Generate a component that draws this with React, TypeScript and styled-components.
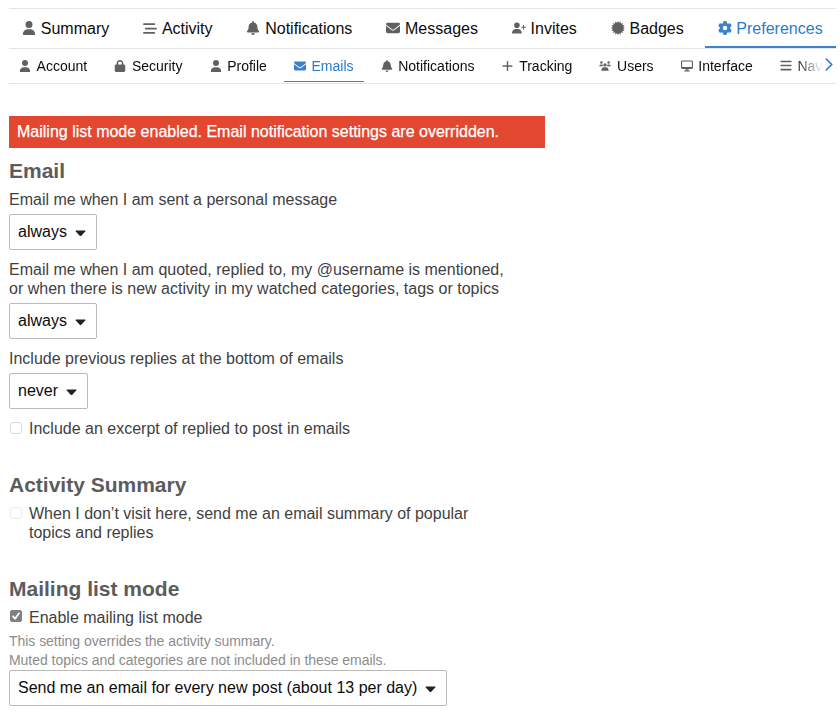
import React from 'react';
import styled, { createGlobalStyle } from 'styled-components';
import {
  FaBars, FaBarsStaggered, FaBell, FaEnvelope, FaGear, FaLock,
  FaUser, FaUserPlus,
} from 'react-icons/fa6';

const Global = createGlobalStyle`
  *, *::before, *::after { box-sizing: border-box; }
  body { margin: 0; background: #fff; overflow: hidden; }
`;

const Page = styled.div`
  height: 713px;
  padding: 8px 4px 0 9px;
  overflow: hidden;
  font-family: "Liberation Sans", Arial, sans-serif;
  font-size: 16px;
  line-height: 19px;
  color: #3f3f3f;
`;

const PrimaryNav = styled.nav`
  display: flex;
  gap: 7.85px;
  width: 827px;
  height: 41px;
  border-top: 1px solid #e6e6e6;
  border-bottom: 1px solid #e6e6e6;
`;

const SecondaryWrap = styled.div`
  display: flex;
  width: 827px;
  height: 35px;
  border-bottom: 1px solid #e6e6e6;
`;

const SecondaryNav = styled.nav`
  display: flex;
  gap: 7.1px;
  width: 814px;
  overflow: hidden;
  mask-image: linear-gradient(to right, #000 786px, transparent 814px);
`;

const NavItem = styled.a<{ $active?: boolean; $small?: boolean }>`
  display: flex;
  flex: none;
  align-items: center;
  gap: ${(p) => (p.$small ? '5.6px' : '4.8px')};
  padding: ${(p) => (p.$small ? '2px 10px 0' : '0 13px 1px')};
  font-size: ${(p) => (p.$small ? '14px' : '16px')};
  color: ${(p) => (p.$active ? '#2b7bca' : '#0c0c0c')};
  border-bottom: ${(p) => (p.$small ? '1px' : '2px')} solid ${(p) => (p.$active ? '#3f82cc' : 'transparent')};
  border-top: ${(p) => (p.$small ? '1px' : '2px')} solid transparent;
  margin-bottom: ${(p) => (p.$small ? '1px' : '0')};
`;

const IconBox = styled.span<{ $active?: boolean; $small?: boolean }>`
  display: flex;
  flex: none;
  align-items: center;
  justify-content: center;
  width: ${(p) => (p.$small ? '12px' : '14px')};
  height: 14px;
  margin-top: ${(p) => (p.$small ? '-2px' : '0')};
  color: ${(p) => (p.$active ? '#3f82cc' : '#606060')};
`;

const ScrollButton = styled.button`
  display: flex;
  align-items: center;
  justify-content: center;
  width: 12px;
  padding: 0 0 3px;
  border: 0;
  background: none;
`;

const Content = styled.main`
  width: 536px;
  padding-top: 32px;
`;

const Warning = styled.div`
  height: 32px;
  padding-left: 8px;
  background: #e44730;
  color: #fff;
  line-height: 32px;
  -webkit-text-stroke: 0.25px #fff;
`;

const Section = styled.section`
  margin-top: 10px;
  & + & { margin-top: 34px; }
`;

const Heading = styled.h3`
  margin: 0;
  font-size: 21px;
  line-height: 26px;
  font-weight: bold;
  color: #5c5c5c;
`;

const Field = styled.div`
  margin-top: 6px;
  & + & { margin-top: 10px; }
`;

const Label = styled.div`
  white-space: pre-line;
`;

const Select = styled.div<{ $width: number; $top?: number }>`
  display: flex;
  align-items: center;
  justify-content: space-between;
  width: ${(p) => p.$width}px;
  height: 36px;
  margin-top: ${(p) => p.$top ?? 5}px;
  padding: 0 10.5px 1px 8px;
  border: 1px solid #b9b9b9;
  border-radius: 2px;
  background: #fff;
  color: #0c0c0c;
`;

const Caret = styled.svg`
  width: 11px;
  height: 7px;
  margin-top: 3px;
`;

const CheckRow = styled.label<{ $top: number }>`
  display: flex;
  gap: 7px;
  margin-top: ${(p) => p.$top}px;
  padding-left: 1px;
  white-space: pre-line;
`;

const Box = styled.span<{ $checked?: boolean; $faint?: boolean }>`
  display: flex;
  flex: none;
  width: 12px;
  height: 12px;
  margin-top: ${(p) => (p.$checked ? '2px' : '2.5px')};
  border: 1px solid ${(p) => (p.$checked ? '#808080' : p.$faint ? '#ebebeb' : '#d8d8d8')};
  border-radius: ${(p) => (p.$checked ? '2px' : '3px')};
  background: ${(p) => (p.$checked ? '#808080' : '#fff')};
`;

const Hint = styled.div`
  margin-top: 5px;
  font-size: 14px;
  line-height: 19px;
  letter-spacing: -0.04px;
  color: #8c8c8c;
`;

function Badge({ size = 14 }: { size?: number }) {
  const points = Array.from({ length: 32 }, (_, i) => {
    const r = i % 2 ? 6 : 8;
    const a = (i * Math.PI) / 16;
    return `${(8 + r * Math.sin(a)).toFixed(2)},${(8 - r * Math.cos(a)).toFixed(2)}`;
  }).join(' ');
  return (
    <svg width={size} height={size} viewBox="0 0 16 16">
      <polygon points={points} fill="currentColor" />
    </svg>
  );
}

function Monitor() {
  return (
    <svg width="12" height="12" viewBox="0 0 12 12" fill="none" stroke="currentColor" strokeWidth="1.1">
      <rect x=".55" y="1.05" width="10.9" height="7.4" rx=".9" />
      <path d="M1 7.6H11M5.2 8.5V10.6M6.8 8.5V10.6M3.2 11H8.8" />
    </svg>
  );
}

function Plus() {
  return (
    <svg width="12" height="12" viewBox="0 0 12 12" fill="none" stroke="currentColor" strokeWidth="1.4" strokeLinecap="round">
      <path d="M5.5 1.6V10.4M1.1 6H9.9" />
    </svg>
  );
}

function People() {
  return (
    <svg width="12" height="12" viewBox="0 0 12 12" fill="currentColor">
      <circle cx="2.4" cy="2.6" r="1.25" />
      <circle cx="9.6" cy="2.6" r="1.25" />
      <circle cx="6" cy="4.9" r="1.6" />
      <path d="M.2 6.3Q.2 4.5 1.8 4.5H3.6Q3.5 5.5 4.2 6.3ZM11.8 6.3Q11.8 4.5 10.2 4.5H8.4Q8.5 5.5 7.8 6.3ZM2.4 10.8Q2.4 7.3 5 7.3H7Q9.6 7.3 9.6 10.8Z" />
    </svg>
  );
}

const primary = [
  { text: 'Summary', icon: <FaUser size={14} /> },
  { text: 'Activity', icon: <FaBarsStaggered size={15} /> },
  { text: 'Notifications', icon: <FaBell size={14} /> },
  { text: 'Messages', icon: <FaEnvelope size={14} /> },
  { text: 'Invites', icon: <FaUserPlus size={14} /> },
  { text: 'Badges', icon: <Badge /> },
  { text: 'Preferences', icon: <FaGear size={14} />, active: true },
];

const secondary = [
  { text: 'Account', icon: <FaUser size={12} /> },
  { text: 'Security', icon: <FaLock size={12} /> },
  { text: 'Profile', icon: <FaUser size={12} /> },
  { text: 'Emails', icon: <FaEnvelope size={12} />, active: true },
  { text: 'Notifications', icon: <FaBell size={12} /> },
  { text: 'Tracking', icon: <Plus /> },
  { text: 'Users', icon: <People /> },
  { text: 'Interface', icon: <Monitor /> },
  { text: 'Nav', icon: <FaBars size={13} /> },
];

function Dropdown({ value, width, top }: { value: string; width: number; top?: number }) {
  return (
    <Select $width={width} $top={top}>
      {value}
      <Caret viewBox="0 0 11 7">
        <path d="M1.1 .5H9.9Q11 .7 10.2 1.6L6.3 5.7Q5.5 6.4 4.7 5.7L.8 1.6Q0 .7 1.1 .5Z" fill="#222" />
      </Caret>
    </Select>
  );
}

export default function App() {
  return (
    <Page>
      <Global />
      <PrimaryNav>
        {primary.map((n) => (
          <NavItem key={n.text} $active={n.active}>
            <IconBox $active={n.active}>{n.icon}</IconBox>
            {n.text}
          </NavItem>
        ))}
      </PrimaryNav>
      <SecondaryWrap>
        <SecondaryNav>
          {secondary.map((n) => (
            <NavItem key={n.text} $small $active={n.active}>
              <IconBox $small $active={n.active}>{n.icon}</IconBox>
              {n.text}
            </NavItem>
          ))}
        </SecondaryNav>
        <ScrollButton aria-label="Scroll right">
          <svg width="8" height="13" viewBox="0 0 8 13" fill="none" stroke="#2b7bca" strokeWidth="1.6" strokeLinecap="round" strokeLinejoin="round">
            <path d="M1.2 1 6.8 6.5 1.2 12" />
          </svg>
        </ScrollButton>
      </SecondaryWrap>
      <Content>
        <Warning>Mailing list mode enabled. Email notification settings are overridden.</Warning>
        <Section>
          <Heading>Email</Heading>
          <Field>
            <Label>Email me when I am sent a personal message</Label>
            <Dropdown value="always" width={88} />
          </Field>
          <Field>
            <Label>{'Email me when I am quoted, replied to, my @username is mentioned,\nor when there is new activity in my watched categories, tags or topics'}</Label>
            <Dropdown value="always" width={88} />
          </Field>
          <Field>
            <Label>Include previous replies at the bottom of emails</Label>
            <Dropdown value="never" width={79} />
          </Field>
          <CheckRow $top={10}>
            <Box />
            <span>Include an excerpt of replied to post in emails</span>
          </CheckRow>
        </Section>
        <Section>
          <Heading>Activity Summary</Heading>
          <CheckRow $top={6}>
            <Box $faint />
            <span>{'When I don’t visit here, send me an email summary of popular\ntopics and replies'}</span>
          </CheckRow>
        </Section>
        <Section>
          <Heading>Mailing list mode</Heading>
          <CheckRow $top={6}>
            <Box $checked>
              <svg width="10" height="10" viewBox="0 0 10 10" fill="none" stroke="#fff" strokeWidth="1.8" strokeLinecap="round" strokeLinejoin="round">
                <path d="M2 5.4 4.1 7.7 8 2.2" />
              </svg>
            </Box>
            <span>Enable mailing list mode</span>
          </CheckRow>
          <Hint>
            This setting overrides the activity summary.
            <br />
            Muted topics and categories are not included in these emails.
          </Hint>
          <Dropdown value="Send me an email for every new post (about 13 per day)" width={438} top={0} />
        </Section>
      </Content>
    </Page>
  );
}
